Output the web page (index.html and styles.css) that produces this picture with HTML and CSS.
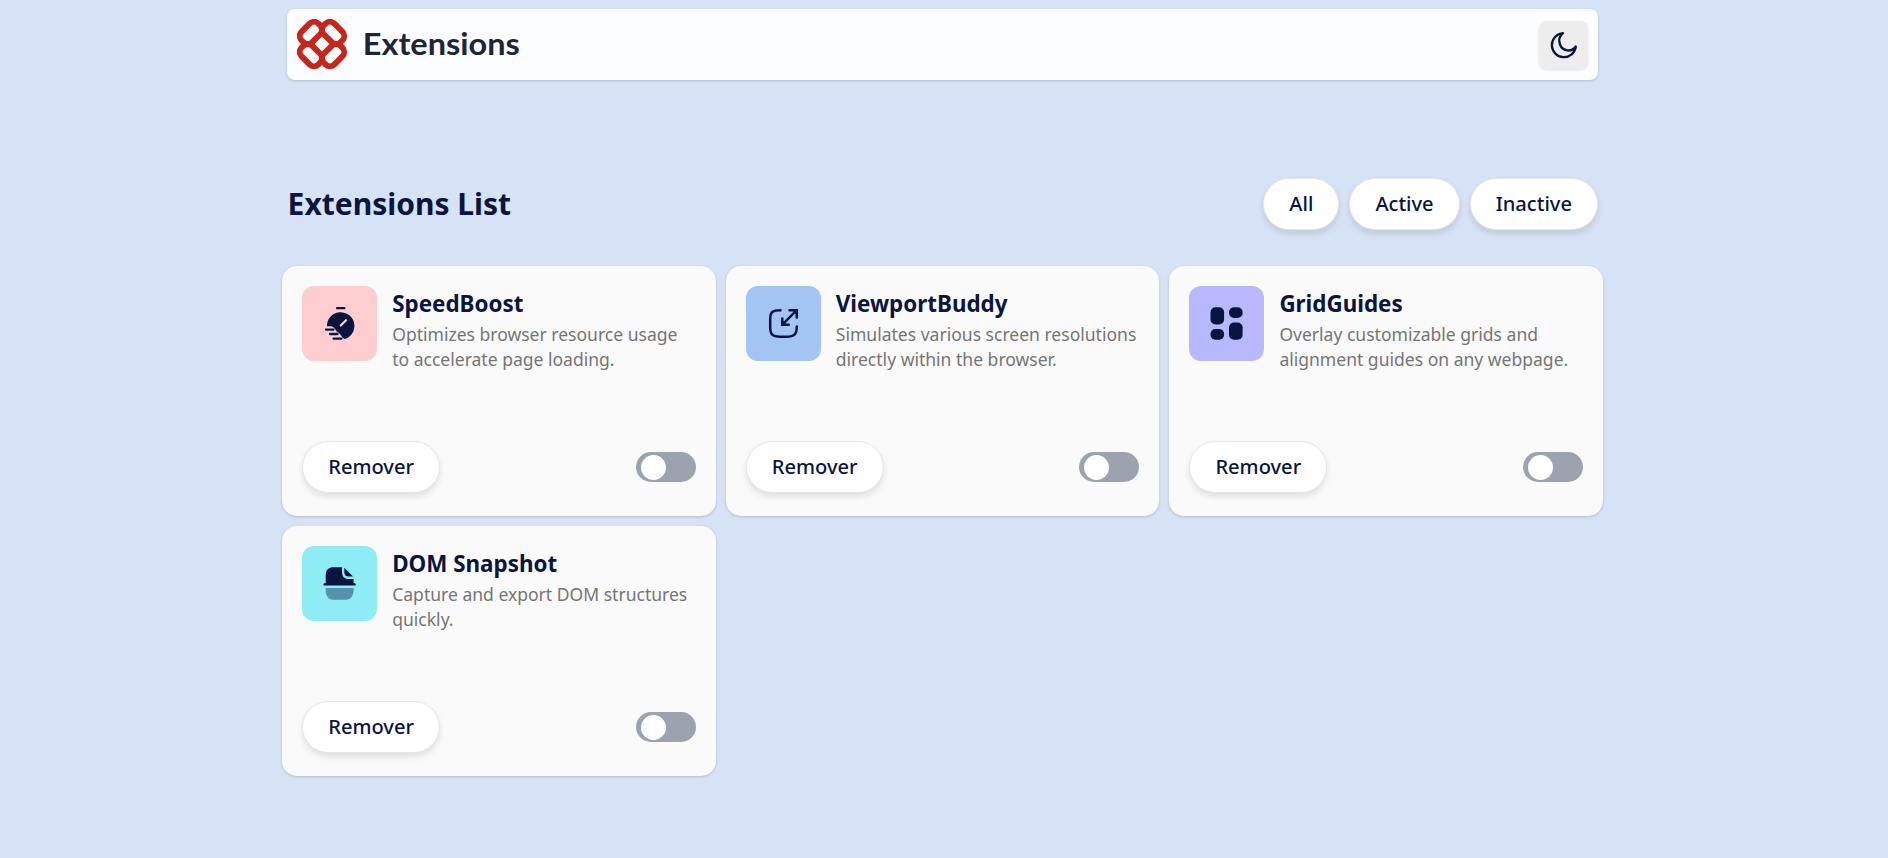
FILE: index.html
```html
<!DOCTYPE html>
<html lang="en">
<head>
<meta charset="utf-8">
<title>Extensions</title>
<link rel="stylesheet" href="styles.css">
</head>
<body>
<div class="page">
  <header class="header">
    <svg class="logo" width="240" height="50" viewBox="0 0 240 50">
      <g fill="none" stroke="#c8251c" stroke-width="5.9">
        <rect x="-11.9" y="-7.5" width="23.8" height="15" rx="6.3" transform="translate(13.9 13.9) rotate(-45)"/>
        <rect x="-11.9" y="-7.5" width="23.8" height="15" rx="6.3" transform="translate(36.1 13.9) rotate(45)"/>
        <rect x="-11.9" y="-7.5" width="23.8" height="15" rx="6.3" transform="translate(13.9 36.1) rotate(45)"/>
        <rect x="-11.9" y="-7.5" width="23.8" height="15" rx="6.3" transform="translate(36.1 36.1) rotate(-45)"/>
      </g>
      <text class="logo-text" x="65.8" y="35.500" textLength="157" lengthAdjust="spacingAndGlyphs">Extensions</text>
    </svg>
    <button class="theme" aria-label="Toggle theme">
      <svg width="28" height="28" viewBox="0 0 28 28"><path d="M13 2.200A12 12 0 1 0 25.800 15.500A8.900 8.900 0 0 1 10 13.500C8.500 9.500 9.300 5.300 13 2.200Z" fill="none" stroke="#091540" stroke-width="2.300" stroke-linejoin="round"/></svg>
    </button>
  </header>
  <section class="bar">
    <h1 class="bar-title">Extensions List</h1>
    <div class="filters">
      <button class="btn">All</button>
      <button class="btn">Active</button>
      <button class="btn">Inactive</button>
    </div>
  </section>
  <main class="grid">
    <article class="card">
      <div class="info">
        <div class="icon pink"><svg width="35" height="35" viewBox="0 0 35 35" fill="#091540">
          <rect x="14" y="1" width="9.500" height="2.200" rx="1"/>
          <path d="M22.600 33C19.300 31.500 18.800 27.800 15.500 26C13.200 24.800 13.500 22 10.500 20.800C8.600 20 6.500 20.600 5 20.200A13.700 13.700 0 1 1 22.600 33Z"/>
          <path d="M18.800 19.500L24 14.300" stroke="#ffcdd0" stroke-width="2.300" stroke-linecap="round"/>
          <path d="M4 23.600H11.500M8 28H15.500M11.500 32.600H19.500" stroke="#091540" stroke-width="2.300" stroke-linecap="round"/>
        </svg></div>
        <div class="text"><h2 class="name">SpeedBoost</h2><p class="desc">Optimizes browser resource usage to accelerate page loading.</p></div>
      </div>
      <div class="actions"><button class="btn">Remover</button><span class="toggle"></span></div>
    </article>
    <article class="card">
      <div class="info">
        <div class="icon blue"><svg width="35" height="35" viewBox="0 0 35 35" fill="none" stroke="#091540" stroke-width="2.500" stroke-linecap="round" stroke-linejoin="round">
          <path d="M14.500 4.200C6.500 4.200 4.200 6 4.200 13V21C4.200 28.500 6.500 30.800 14 30.800H20.500C28 30.800 30.800 28.500 30.800 20.500"/>
          <path d="M30.800 4.200L16.300 18.700M23.500 4.200H30.800V11.500M16.300 12.500V18.700H22.700" stroke-linejoin="miter"/>
        </svg></div>
        <div class="text"><h2 class="name">ViewportBuddy</h2><p class="desc">Simulates various screen resolutions directly within the browser.</p></div>
      </div>
      <div class="actions"><button class="btn">Remover</button><span class="toggle"></span></div>
    </article>
    <article class="card">
      <div class="info">
        <div class="icon violet"><svg width="35" height="35" viewBox="0 0 35 35" fill="#091540">
          <rect x="1.500" y="1.300" width="13.600" height="17.200" rx="5"/>
          <rect x="20" y="1.300" width="13.600" height="10.700" rx="5"/>
          <rect x="1.500" y="23" width="13.600" height="10.700" rx="5"/>
          <rect x="20" y="16.500" width="13.600" height="17.200" rx="5"/>
        </svg></div>
        <div class="text"><h2 class="name">GridGuides</h2><p class="desc">Overlay customizable grids and alignment guides on any webpage.</p></div>
      </div>
      <div class="actions"><button class="btn">Remover</button><span class="toggle"></span></div>
    </article>
    <article class="card">
      <div class="info">
        <div class="icon cyan"><svg width="35" height="35" viewBox="0 0 35 35" fill="#091540">
          <path d="M3.700 17.200V9.500C3.700 3.500 6.500 1.200 12 1.200H20V6C20 10.500 22.500 13 27 13H31.600V17.200H32.600A1.200 1.200 0 0 1 32.600 19.600H2.600A1.200 1.200 0 0 1 2.600 17.200Z"/>
          <path d="M22.300 1.700L31 10.500H27C24 10.500 22.300 9 22.300 6Z"/>
          <path opacity=".42" d="M3.700 22H31.600V23.500C31.600 30.500 28.500 33.800 23 33.800H12.500C6.500 33.800 3.700 30.500 3.700 23.500Z"/>
        </svg></div>
        <div class="text"><h2 class="name">DOM Snapshot</h2><p class="desc">Capture and export DOM structures quickly.</p></div>
      </div>
      <div class="actions"><button class="btn">Remover</button><span class="toggle"></span></div>
    </article>
  </main>
</div>
</body>
</html>
```
FILE: styles.css
```css
* { box-sizing: border-box; margin: 0; padding: 0; }
body { background: #d6e2f5; font-family: "Noto Sans", sans-serif; color: #091540; min-height: 100vh; }
.page { width: 1320.8px; margin-left: 282.2px; padding-top: 9px; }
.header { display: flex; align-items: center; justify-content: space-between; height: 71px; margin: 0 5px; padding: 0 9.5px 0 10px; background: #fcfdff; border-radius: 8px; box-shadow: 0 1px 3px rgba(0,0,0,.16); }
.logo { display: block; margin-top: -1px; }
.logo-text { font: 700 30px Lato, sans-serif; fill: #202437; }
.theme { display: flex; align-items: center; justify-content: center; width: 49px; height: 48px; border: 0; border-radius: 8px; background: #ededed; box-shadow: 0 1px 3px rgba(0,0,0,.12); }
.bar { display: flex; align-items: center; justify-content: space-between; height: 52px; margin: 98px 5px 36px; }
.bar-title { font-size: 30px; font-weight: 700; line-height: 52px; padding-left: .4px; }
.filters { display: flex; gap: 10px; }
.btn { height: 52px; padding: 0 25px 1px; border: 1px solid #e6e6e6; border-radius: 26px; background: #fff; color: #091540; font: 500 20.1px "Noto Sans", sans-serif; box-shadow: 0 4px 6px rgba(0,0,0,.1); }
.grid { display: grid; grid-template-columns: repeat(3, 1fr); grid-auto-rows: 250px; gap: 10px; }
.card { display: flex; flex-direction: column; justify-content: space-between; padding: 20px; padding-bottom: 23px; background: #fafafa; border-radius: 15px; box-shadow: 0 1px 3px rgba(0,0,0,.16); }
.info { display: flex; gap: 15px; }
.icon { display: flex; align-items: center; justify-content: center; flex: none; width: 75px; height: 75px; border-radius: 12px; }
.pink { background: #ffcdd0; }
.blue { background: #a4c4f3; }
.violet { background: #b8b8ff; }
.cyan { background: #8eedf4; }
.name { font-size: 22.4px; line-height: 30px; font-weight: 700; padding-top: 3px; margin-bottom: 3px; }
.desc { font-size: 17.55px; line-height: 25px; color: #757575; }
.actions { display: flex; align-items: center; justify-content: space-between; }
.toggle { display: flex; align-items: center; width: 60px; height: 30px; padding-left: 5px; border-radius: 15px; background: #9ca3af; }
.toggle::before { content: ""; width: 25px; height: 25px; border-radius: 50%; background: #fff; }
```
